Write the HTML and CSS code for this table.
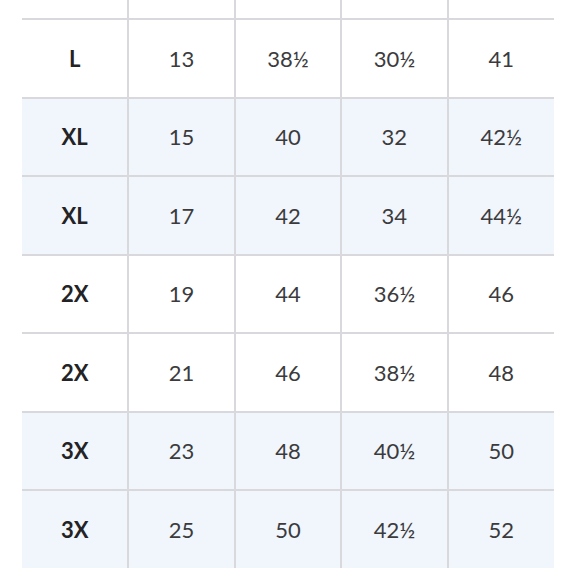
FILE: index.html
```html
<!DOCTYPE html>
<html lang="en">
<head>
<meta charset="utf-8">
<title>Size chart</title>
<link rel="stylesheet" href="styles.css">
</head>
<body>
<table class="chart">
  <tbody>
    <tr class="row row-top"><td></td><td></td><td></td><td></td><td></td></tr>
    <tr class="row"><th>L</th><td>13</td><td>38½</td><td>30½</td><td>41</td></tr>
    <tr class="row row-tint"><th>XL</th><td>15</td><td>40</td><td>32</td><td>42½</td></tr>
    <tr class="row row-tint"><th>XL</th><td>17</td><td>42</td><td>34</td><td>44½</td></tr>
    <tr class="row"><th>2X</th><td>19</td><td>44</td><td>36½</td><td>46</td></tr>
    <tr class="row"><th>2X</th><td>21</td><td>46</td><td>38½</td><td>48</td></tr>
    <tr class="row row-tint"><th>3X</th><td>23</td><td>48</td><td>40½</td><td>50</td></tr>
    <tr class="row row-tint"><th>3X</th><td>25</td><td>50</td><td>42½</td><td>52</td></tr>
  </tbody>
</table>
</body>
</html>
```
FILE: styles.css
```css
html, body {
  margin: 0;
  padding: 0;
  background: #ffffff;
}

.chart {
  margin: 0 0 0 22px;
  width: 532px;
  table-layout: fixed;
  border-collapse: collapse;
  border-spacing: 0;
  font-family: Lato, "Open Sans", sans-serif;
  font-size: 22px;
  color: #3b3b3d;
}

.chart th,
.chart td {
  padding: 0;
  height: 76.5px;
  text-align: center;
  vertical-align: middle;
  border-top: 2px solid #d9d9dd;
  border-left: 2px solid #d9d9dd;
}

.chart th:first-child,
.chart td:first-child {
  border-left: none;
}

.chart th {
  font-weight: 700;
  color: #232325;
}

.chart td {
  font-weight: 400;
}

.row-top td {
  height: 18px;
  border-top: none;
}

.row-tint th,
.row-tint td {
  background: #f1f5fc;
}
```
